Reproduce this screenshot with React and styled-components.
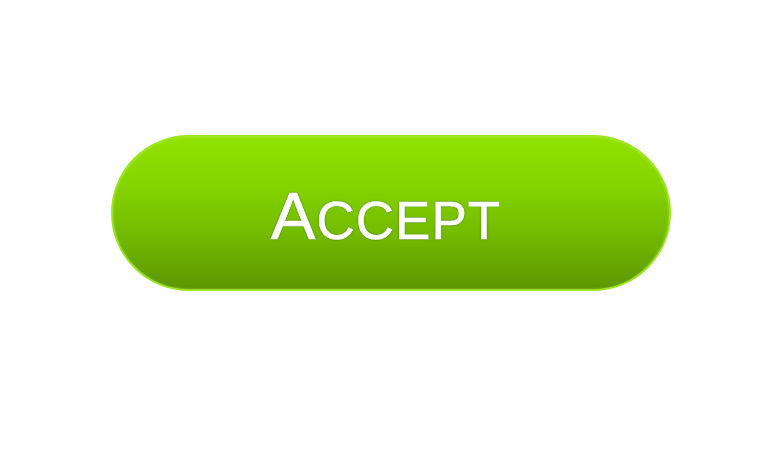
import React from 'react'
import styled, { createGlobalStyle } from 'styled-components'

const Global = createGlobalStyle`
    html, body {
        margin: 0;
        padding: 0;
        background: #ffffff;
    }
`

const Page = styled.div`
    width: 780px;
    height: 470px;
    display: flex;
    align-items: flex-start;
    justify-content: center;
    padding-top: 135px;
    box-sizing: border-box;
`

const Button = styled.button`
    width: 560px;
    height: 156px;
    margin-left: 1px;
    border-radius: 78px;
    border: 2px solid #9be620;
    background: linear-gradient(180deg, #92e200 0%, #86d400 30%, #72ba00 65%, #5c9600 100%);
    box-shadow: inset 0 0 2px rgba(255, 255, 255, 0.35);
    display: flex;
    align-items: center;
    justify-content: center;
    cursor: pointer;
    padding: 0;
    box-sizing: border-box;
`

const Label = styled.span`
    font-family: "Liberation Sans", Arial, sans-serif;
    font-size: 53px;
    color: #ffffff;
    letter-spacing: 1px;
    -webkit-text-stroke: 0.6px #ffffff;
    text-shadow: 0 0 2px rgba(60, 90, 0, 0.9), 0 0 1px rgba(60, 90, 0, 0.9);
    margin-top: 4px;
    margin-right: 9px;
`

const Big = styled.span`
    font-size: 67px;
`

export default function App() {
    return (
        <>
            <Global />
            <Page>
                <Button>
                    <Label><Big>A</Big>CCEPT</Label>
                </Button>
            </Page>
        </>
    )
}
